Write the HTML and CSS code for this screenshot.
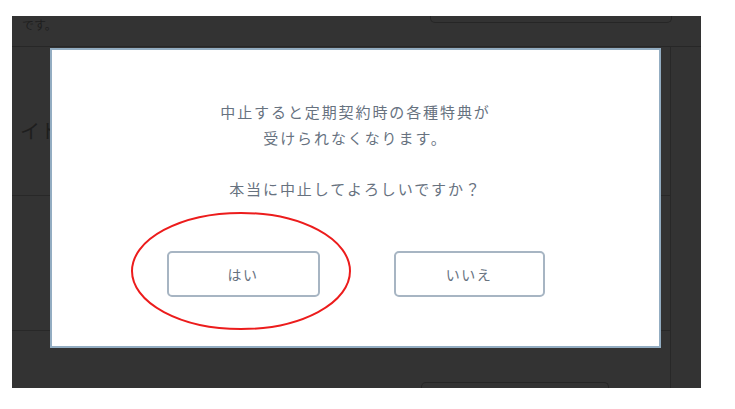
FILE: index.html
```html
<!DOCTYPE html>
<html lang="ja">
<head>
<meta charset="utf-8">
<link rel="stylesheet" href="styles.css">
</head>
<body>
<div class="screen">
  <div class="bg-top">
    <span class="bg-note">です。</span>
    <span class="bg-box-top"></span>
  </div>
  <div class="bg-body">
    <div class="bg-main">
      <div class="bg-row bg-row1"><span class="bg-title">イト</span></div>
      <div class="bg-row bg-row2"></div>
      <div class="bg-row bg-row3"><span class="bg-box-bottom"></span></div>
    </div>
  </div>

  <div class="modal">
    <p class="msg">中止すると定期契約時の各種特典が<br>受けられなくなります。</p>
    <p class="msg">本当に中止してよろしいですか？</p>
    <div class="actions">
      <button class="btn btn-yes">はい</button>
      <button class="btn btn-no">いいえ</button>
    </div>
    <svg class="mark" width="224" height="122" viewBox="0 0 224 122">
      <ellipse cx="111" cy="60" rx="109" ry="58" fill="none" stroke="#ec1c1c" stroke-width="2"/>
    </svg>
  </div>
</div>
</body>
</html>
```

FILE: styles.css
```css
html, body {
  margin: 0;
  padding: 0;
  background: #ffffff;
}
body {
  font-family: "Noto Sans CJK JP", "Noto Sans", sans-serif;
}
.screen {
  position: relative;
  margin: 16px 0 0 12px;
  width: 689px;
  height: 372px;
  background: #333333;
  overflow: hidden;
}
.bg-top {
  height: 30px;
  border-bottom: 1px solid #272727;
  display: flex;
  justify-content: space-between;
  align-items: flex-start;
}
.bg-note {
  margin: 1px 0 0 10px;
  font-size: 12px;
  line-height: 15px;
  color: #1e1e1e;
}
.bg-box-top {
  width: 240px;
  height: 6px;
  margin-right: 29px;
  border: 1px solid #262626;
  border-top: none;
  border-radius: 0 0 5px 5px;
}
.bg-body {
  display: flex;
  height: 341px;
}
.bg-main {
  width: 658px;
  border-right: 1px solid #282828;
  display: flex;
  flex-direction: column;
}
.bg-row1 {
  height: 148px;
  border-bottom: 1px solid #282828;
  display: flex;
  align-items: flex-end;
}
.bg-title {
  margin: 0 0 52px 8px;
  font-size: 20px;
  line-height: 24px;
  color: #1e1e1e;
}
.bg-row2 {
  height: 134px;
  border-bottom: 1px solid #282828;
}
.bg-row3 {
  flex: 1;
  display: flex;
  align-items: flex-end;
}
.bg-box-bottom {
  width: 186px;
  height: 6px;
  margin-left: 409px;
  margin-bottom: -1px;
  border: 1px solid #262626;
  border-bottom: none;
  border-radius: 5px 5px 0 0;
}
.modal {
  position: absolute;
  left: 38px;
  top: 32px;
  width: 607px;
  height: 247px;
  background: #ffffff;
  border: 2px solid #93adc2;
  display: flex;
  flex-direction: column;
  align-items: center;
  padding-top: 49px;
  box-sizing: content-box;
}
.msg {
  margin: 0;
  font-size: 15px;
  line-height: 26px;
  letter-spacing: 1.9px;
  color: #67727f;
  text-align: center;
}
.msg + .msg {
  margin-top: 25px;
}
.actions {
  margin-top: 49px;
  display: flex;
  gap: 74px;
}
.btn {
  height: 46px;
  box-sizing: border-box;
  background: #ffffff;
  border: 2px solid #a7b5c3;
  border-radius: 5px;
  font-family: "Noto Sans CJK JP", "Noto Sans", sans-serif;
  font-size: 14px;
  letter-spacing: 1.5px;
  color: #67727f;
  padding: 0;
}
.btn-yes {
  width: 153px;
}
.btn-no {
  width: 151px;
}
.mark {
  position: absolute;
  left: 78px;
  top: 161px;
}
```
